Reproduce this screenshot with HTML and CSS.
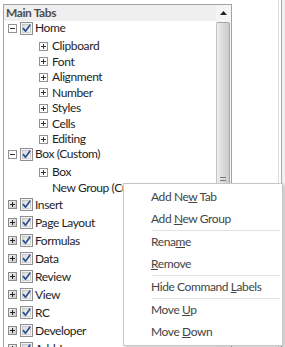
FILE: index.html
```html
<!DOCTYPE html>
<html>
<head>
<meta charset="utf-8">
<link rel="stylesheet" href="styles.css">
</head>
<body>
<svg width="0" height="0" class="defs">
  <defs>
    <linearGradient id="gChk" x1="0" y1="0" x2="1" y2="1">
      <stop offset="0" stop-color="#d9d9d9"/>
      <stop offset="1" stop-color="#fbfbfb"/>
    </linearGradient>
    <linearGradient id="gExp" x1="0" y1="0" x2="1" y2="1">
      <stop offset="0" stop-color="#f4f4f4"/>
      <stop offset="1" stop-color="#c9c9c9"/>
    </linearGradient>
    <symbol id="chk" viewBox="0 0 13 13">
      <rect x="0.5" y="0.5" width="12" height="12" fill="#f4f4f4" stroke="#8e8f8f"/>
      <rect x="2.5" y="2.5" width="8" height="8" fill="url(#gChk)" stroke="#b4b4b4" stroke-width="0.6"/>
      <path d="M3.4 6.6 L5.5 9.2 L9.8 3.2" fill="none" stroke="#2a4f93" stroke-width="1.7" stroke-linecap="round" stroke-linejoin="round"/>
    </symbol>
    <symbol id="minus" viewBox="0 0 9 9">
      <rect x="0.5" y="0.5" width="8" height="8" fill="#fff" stroke="#919191"/>
      <path d="M2 4.5 H7" stroke="#333" stroke-width="1"/>
    </symbol>
    <symbol id="plus" viewBox="0 0 9 9">
      <rect x="0.5" y="0.5" width="8" height="8" fill="#fff" stroke="#919191"/>
      <path d="M2 4.5 H7 M4.5 2 V7" stroke="#333" stroke-width="1"/>
    </symbol>
    <symbol id="plusd" viewBox="0 0 9 9">
      <rect x="0.5" y="0.5" width="8" height="8" fill="url(#gExp)" stroke="#8c8c8c"/>
      <path d="M2 4.5 H7 M4.5 2 V7" stroke="#222" stroke-width="1"/>
    </symbol>
  </defs>
</svg>

<div class="screen">
  <div class="panel">
    <div class="list">
      <div class="head">Main Tabs</div>
      <div class="tree">
        <div class="node open">
          <div class="row top"><svg class="exp"><use href="#minus"/></svg><svg class="chk"><use href="#chk"/></svg><span class="lbl">Home</span></div>
          <div class="kids">
            <div class="row sub"><svg class="exp"><use href="#plus"/></svg><span class="lbl">Clipboard</span></div>
            <div class="row sub"><svg class="exp"><use href="#plus"/></svg><span class="lbl">Font</span></div>
            <div class="row sub"><svg class="exp"><use href="#plus"/></svg><span class="lbl">Alignment</span></div>
            <div class="row sub"><svg class="exp"><use href="#plus"/></svg><span class="lbl">Number</span></div>
            <div class="row sub"><svg class="exp"><use href="#plus"/></svg><span class="lbl">Styles</span></div>
            <div class="row sub"><svg class="exp"><use href="#plus"/></svg><span class="lbl">Cells</span></div>
            <div class="row sub"><svg class="exp"><use href="#plus"/></svg><span class="lbl">Editing</span></div>
          </div>
        </div>
        <div class="node open">
          <div class="row top"><svg class="exp"><use href="#minus"/></svg><svg class="chk"><use href="#chk"/></svg><span class="lbl">Box (Custom)</span></div>
          <div class="kids">
            <div class="row sub"><svg class="exp"><use href="#plus"/></svg><span class="lbl">Box</span></div>
            <div class="row sub"><span class="exp-none"></span><span class="lbl clip">New Group (Custom)</span></div>
          </div>
        </div>
        <div class="row top"><svg class="exp"><use href="#plusd"/></svg><svg class="chk"><use href="#chk"/></svg><span class="lbl">Insert</span></div>
        <div class="row top"><svg class="exp"><use href="#plusd"/></svg><svg class="chk"><use href="#chk"/></svg><span class="lbl">Page Layout</span></div>
        <div class="row top"><svg class="exp"><use href="#plusd"/></svg><svg class="chk"><use href="#chk"/></svg><span class="lbl">Formulas</span></div>
        <div class="row top"><svg class="exp"><use href="#plusd"/></svg><svg class="chk"><use href="#chk"/></svg><span class="lbl">Data</span></div>
        <div class="row top"><svg class="exp"><use href="#plusd"/></svg><svg class="chk"><use href="#chk"/></svg><span class="lbl">Review</span></div>
        <div class="row top"><svg class="exp"><use href="#plusd"/></svg><svg class="chk"><use href="#chk"/></svg><span class="lbl">View</span></div>
        <div class="row top"><svg class="exp"><use href="#plusd"/></svg><svg class="chk"><use href="#chk"/></svg><span class="lbl">RC</span></div>
        <div class="row top"><svg class="exp"><use href="#plusd"/></svg><svg class="chk"><use href="#chk"/></svg><span class="lbl">Developer</span></div>
        <div class="row top"><svg class="exp"><use href="#plusd"/></svg><svg class="chk"><use href="#chk"/></svg><span class="lbl">Add-Ins</span></div>
      </div>
    </div>
    <div class="vscroll">
      <div class="up"><svg class="arrow" viewBox="0 0 7 4"><path d="M3.5 0 L7 4 H0 Z" fill="#222"/></svg></div>
      <div class="thumb"><span class="grip"></span></div>
    </div>
  </div>
  <div class="edge"><div class="edge-in"></div></div>
</div>

<div class="menu">
  <div class="mi">Add Ne<u>w</u> Tab</div>
  <div class="mi">Add <u>N</u>ew Group</div>
  <div class="sep"></div>
  <div class="mi">Rena<u>m</u>e</div>
  <div class="mi"><u>R</u>emove</div>
  <div class="sep"></div>
  <div class="mi">Hide Command <u>L</u>abels</div>
  <div class="sep"></div>
  <div class="mi">Move <u>U</u>p</div>
  <div class="mi">Move <u>D</u>own</div>
</div>
</body>
</html>
```

FILE: styles.css
```css
html, body {
  margin: 0;
  padding: 0;
  background: #fff;
  width: 285px;
  height: 347px;
  overflow: hidden;
  font-family: Lato, "Noto Sans", sans-serif;
  font-size: 12px;
  letter-spacing: -0.4px;
  position: relative;
}

.defs {
  position: absolute;
  width: 0;
  height: 0;
}

.screen {
  display: flex;
  padding: 4px 0 0 3px;
  height: 343px;
  overflow: hidden;
}

.panel {
  display: flex;
  width: 227px;
  height: 360px;
  border: 1px solid #a3a3a3;
  border-bottom: none;
}

.list {
  width: 212px;
  display: flex;
  flex-direction: column;
  overflow: hidden;
}

.head {
  height: 16px;
  line-height: 16px;
  background: #efefef;
  padding-left: 2px;
  font-weight: bold;
  color: #4e4e4e;
  flex: none;
}

.tree {
  color: #1e1e1e;
  white-space: nowrap;
}

.row {
  display: flex;
  align-items: center;
}

.lbl {
  line-height: 14px;
}

.row.top {
  height: 18px;
  padding-left: 4px;
}

.open > .row.top {
  height: 14px;
}

.kids {
  padding-top: 3.5px;
}

.row.sub {
  height: 15.5px;
  padding-left: 35px;
}

.exp {
  width: 9px;
  height: 9px;
  flex: none;
}

.exp-none {
  width: 9px;
  flex: none;
}

.chk {
  width: 13px;
  height: 13px;
  margin-left: 3px;
  flex: none;
}

.row.top .lbl {
  margin-left: 2px;
}

.row.sub .lbl {
  margin-left: 4px;
}

.lbl.clip {
  width: 71px;
  overflow: hidden;
}

.vscroll {
  width: 15px;
  background: #f7f7f7;
  display: flex;
  flex-direction: column;
}

.up {
  height: 16px;
  display: flex;
  align-items: center;
  justify-content: center;
  background: #f5f5f5;
}

.arrow {
  width: 7px;
  height: 4px;
  margin-right: 1px;
}

.thumb {
  margin-top: 1px;
  width: 12px;
  height: 314px;
  border: 1px solid #a6a6a6;
  border-left-color: #c4c4c4;
  border-radius: 2px;
  background: linear-gradient(to right, #eeeeee, #dddddd 45%, #cbcbd0);
  display: flex;
  align-items: center;
  justify-content: center;
}

.grip {
  width: 6px;
  height: 5px;
  border-top: 1px solid #777;
  border-bottom: 1px solid #777;
  position: relative;
}

.grip::after {
  content: "";
  position: absolute;
  left: 0;
  right: 0;
  top: 2px;
  border-top: 1px solid #777;
}

.edge {
  margin-left: 46px;
  width: 7px;
  height: 347px;
  border-left: 1px solid #dcdcdc;
  margin-top: -4px;
}

.edge-in {
  margin-left: 2px;
  height: 100%;
  border-left: 1px solid #a8a8a8;
  background: #f0f0f0;
}

.menu {
  position: absolute;
  left: 123px;
  top: 183px;
  width: 158px;
  padding: 2px 0;
  background: #fff;
  border: 1px solid #c6c6c6;
  box-shadow: 2px 2px 3px rgba(0, 0, 0, 0.18);
  color: #444;
  font-size: 12px;
}

.mi {
  height: 22px;
  line-height: 22px;
  padding-left: 27px;
  white-space: nowrap;
}

.sep {
  height: 1px;
  margin: 0 2px 0 28px;
  background: #e3e3e3;
}
```
